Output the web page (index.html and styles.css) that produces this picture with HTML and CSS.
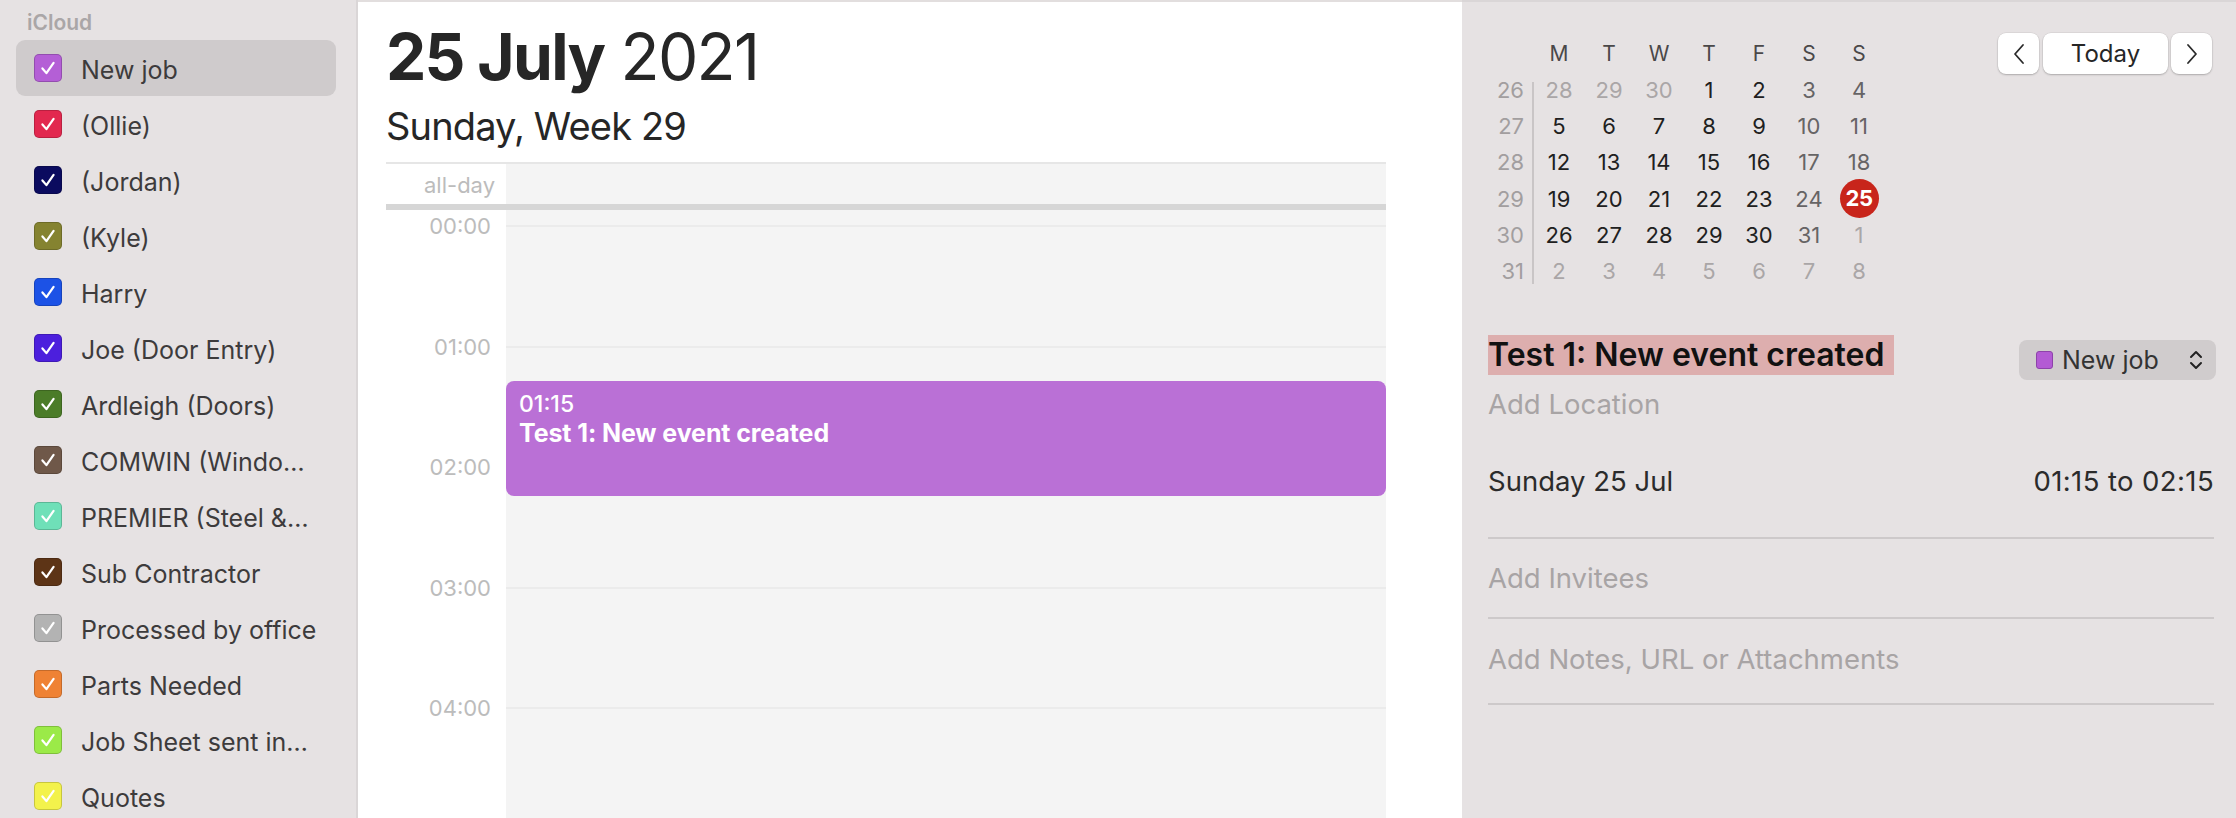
FILE: index.html
```html
<!DOCTYPE html>
<html lang="en">
<head>
<meta charset="utf-8">
<title>Calendar – Day</title>
<link rel="stylesheet" href="styles.css">
</head>
<body>
<div class="app">
  <aside class="sidebar">
    <div class="group-title">iCloud</div>
    <ul class="cal-list">
      <li class="cal-item selected"><span class="check c-newjob"><svg viewBox="0 0 28 28"><path d="M8 14.5 L12.3 19.5 L20 8.5"/></svg></span><span class="cal-name">New job</span></li>
      <li class="cal-item"><span class="check c-ollie"><svg viewBox="0 0 28 28"><path d="M8 14.5 L12.3 19.5 L20 8.5"/></svg></span><span class="cal-name">(Ollie)</span></li>
      <li class="cal-item"><span class="check c-jordan"><svg viewBox="0 0 28 28"><path d="M8 14.5 L12.3 19.5 L20 8.5"/></svg></span><span class="cal-name">(Jordan)</span></li>
      <li class="cal-item"><span class="check c-kyle"><svg viewBox="0 0 28 28"><path d="M8 14.5 L12.3 19.5 L20 8.5"/></svg></span><span class="cal-name">(Kyle)</span></li>
      <li class="cal-item"><span class="check c-harry"><svg viewBox="0 0 28 28"><path d="M8 14.5 L12.3 19.5 L20 8.5"/></svg></span><span class="cal-name">Harry</span></li>
      <li class="cal-item"><span class="check c-joe"><svg viewBox="0 0 28 28"><path d="M8 14.5 L12.3 19.5 L20 8.5"/></svg></span><span class="cal-name">Joe (Door Entry)</span></li>
      <li class="cal-item"><span class="check c-ardleigh"><svg viewBox="0 0 28 28"><path d="M8 14.5 L12.3 19.5 L20 8.5"/></svg></span><span class="cal-name">Ardleigh (Doors)</span></li>
      <li class="cal-item"><span class="check c-comwin"><svg viewBox="0 0 28 28"><path d="M8 14.5 L12.3 19.5 L20 8.5"/></svg></span><span class="cal-name">COMWIN (Windo…</span></li>
      <li class="cal-item"><span class="check c-premier"><svg viewBox="0 0 28 28"><path d="M8 14.5 L12.3 19.5 L20 8.5"/></svg></span><span class="cal-name">PREMIER (Steel &amp;…</span></li>
      <li class="cal-item"><span class="check c-sub"><svg viewBox="0 0 28 28"><path d="M8 14.5 L12.3 19.5 L20 8.5"/></svg></span><span class="cal-name">Sub Contractor</span></li>
      <li class="cal-item"><span class="check c-processed"><svg viewBox="0 0 28 28"><path d="M8 14.5 L12.3 19.5 L20 8.5"/></svg></span><span class="cal-name">Processed by office</span></li>
      <li class="cal-item"><span class="check c-parts"><svg viewBox="0 0 28 28"><path d="M8 14.5 L12.3 19.5 L20 8.5"/></svg></span><span class="cal-name">Parts Needed</span></li>
      <li class="cal-item"><span class="check c-jobsheet"><svg viewBox="0 0 28 28"><path d="M8 14.5 L12.3 19.5 L20 8.5"/></svg></span><span class="cal-name">Job Sheet sent in…</span></li>
      <li class="cal-item"><span class="check c-quotes"><svg viewBox="0 0 28 28"><path d="M8 14.5 L12.3 19.5 L20 8.5"/></svg></span><span class="cal-name">Quotes</span></li>
    </ul>
  </aside>

  <main class="day-view">
    <header class="day-header">
      <h1 class="day-title"><b>25 July</b> 2021</h1>
      <h2 class="day-subtitle">Sunday, Week 29</h2>
    </header>
    <section class="timeline">
      <div class="allday-row">
        <div class="gutter allday-label">all-day</div>
        <div class="allday-cell"></div>
      </div>
      <div class="hours">
        <div class="gutter hour-labels">
          <div class="hour-label">00:00</div>
          <div class="hour-label">01:00</div>
          <div class="hour-label">02:00</div>
          <div class="hour-label">03:00</div>
          <div class="hour-label">04:00</div>
        </div>
        <div class="day-col">
          <div class="slot"></div>
          <div class="slot"></div>
          <div class="slot"></div>
          <div class="slot"></div>
          <div class="slot"></div>
          <div class="slot"></div>
          <div class="event">
            <div class="event-time">01:15</div>
            <div class="event-title">Test 1: New event created</div>
          </div>
        </div>
      </div>
    </section>
  </main>

  <aside class="inspector">
    <div class="inspector-top">
      <div class="mini-cal">
        <div class="weeks">
          <div>26</div><div>27</div><div>28</div><div>29</div><div>30</div><div>31</div>
        </div>
        <div class="days">
          <div class="dow">M</div><div class="dow">T</div><div class="dow">W</div><div class="dow">T</div><div class="dow">F</div><div class="dow">S</div><div class="dow">S</div>
          <div class="d other">28</div><div class="d other">29</div><div class="d other">30</div><div class="d">1</div><div class="d">2</div><div class="d we">3</div><div class="d we">4</div>
          <div class="d">5</div><div class="d">6</div><div class="d">7</div><div class="d">8</div><div class="d">9</div><div class="d we">10</div><div class="d we">11</div>
          <div class="d">12</div><div class="d">13</div><div class="d">14</div><div class="d">15</div><div class="d">16</div><div class="d we">17</div><div class="d we">18</div>
          <div class="d">19</div><div class="d">20</div><div class="d">21</div><div class="d">22</div><div class="d">23</div><div class="d we">24</div><div class="d today"><span>25</span></div>
          <div class="d">26</div><div class="d">27</div><div class="d">28</div><div class="d">29</div><div class="d">30</div><div class="d we">31</div><div class="d other">1</div>
          <div class="d other">2</div><div class="d other">3</div><div class="d other">4</div><div class="d other">5</div><div class="d other">6</div><div class="d other">7</div><div class="d other">8</div>
        </div>
      </div>
      <div class="nav">
        <button class="nav-btn arrow" aria-label="Previous"><svg viewBox="0 0 12 22"><path d="M10 2 L2 11 L10 20"/></svg></button>
        <button class="nav-btn today-btn">Today</button>
        <button class="nav-btn arrow" aria-label="Next"><svg viewBox="0 0 12 22"><path d="M2 2 L10 11 L2 20"/></svg></button>
      </div>
    </div>

    <div class="event-detail">
      <div class="detail-head">
        <span class="detail-title">Test 1: New event created</span>
        <div class="cal-select">
          <span class="swatch"></span>
          <span class="cal-select-name">New job</span>
          <svg class="updown" viewBox="0 0 14 22"><path d="M2 8 L7 3 L12 8"/><path d="M2 14 L7 19 L12 14"/></svg>
        </div>
      </div>
      <div class="placeholder location">Add Location</div>
      <div class="when"><span>Sunday 25 Jul</span><span>01:15 to 02:15</span></div>
      <div class="field placeholder">Add Invitees</div>
      <div class="field placeholder notes">Add Notes, URL or Attachments</div>
    </div>
  </aside>
</div>
</body>
</html>
```

FILE: styles.css
```css
* { box-sizing: border-box; }

html, body {
  margin: 0;
  padding: 0;
  height: 818px;
  overflow: hidden;
}

body {
  font-family: "Inter", "Noto Sans", "Liberation Sans", sans-serif;
  color: #2a2a2a;
  background: #e6e2e3;
}

.app {
  display: flex;
  height: 818px;
  width: 2236px;
}

/* ---------- Sidebar ---------- */
.sidebar {
  width: 358px;
  flex: none;
  background: #e6e2e3;
  border-right: 2px solid #dad6d7;
  padding-top: 6px;
}

.group-title {
  font-size: 21px;
  font-weight: 600;
  color: #aaa6a7;
  padding-left: 27px;
  padding-top: 4px;
  height: 34px;
  line-height: 26px;
}

.cal-list {
  list-style: none;
  margin: 0;
  padding: 0;
}

.cal-item {
  display: flex;
  align-items: center;
  height: 56px;
  margin: 0 20px 0 16px;
  padding-left: 18px;
  border-radius: 9px;
  font-size: 25px;
  color: #3d3b3c;
  white-space: nowrap;
}

.cal-item.selected {
  background: #cfcbcc;
}

.cal-name {
  margin-left: 19px;
  padding-top: 3px;
}

.check {
  width: 28px;
  height: 28px;
  border-radius: 5px;
  flex: none;
  display: flex;
  border: 1px solid rgba(0, 0, 0, 0.18);
}

.check svg {
  width: 26px;
  height: 26px;
  fill: none;
  stroke: #fff;
  stroke-width: 2.4;
  stroke-linecap: round;
  stroke-linejoin: round;
}

.c-newjob    { background: #b45fd6; }
.c-ollie     { background: #e2284f; }
.c-jordan    { background: #0b0b5f; }
.c-kyle      { background: #858330; }
.c-harry     { background: #1c52e6; }
.c-joe       { background: #4c1fdd; }
.c-ardleigh  { background: #4b7c28; }
.c-comwin    { background: #6f5849; }
.c-premier   { background: #6fe0b8; }
.c-sub       { background: #5d3416; }
.c-processed { background: #b3b3b3; }
.c-parts     { background: #ef8234; }
.c-jobsheet  { background: #9bea48; }
.c-quotes    { background: #f3f24c; }

/* ---------- Day view ---------- */
.day-view {
  width: 1104px;
  flex: none;
  background: #fff;
  border-top: 2px solid #e2dede;
  display: flex;
  flex-direction: column;
  padding-left: 28px;
  padding-right: 76px;
}

.day-header {
  padding-top: 23px;
}

.day-title {
  margin: 0;
  font-size: 64px;
  line-height: 64px;
  font-weight: 400;
  letter-spacing: -1.7px;
  color: #262626;
}

.day-title b {
  font-weight: 700;
}

.day-subtitle {
  margin: 14px 0 0;
  font-size: 38px;
  line-height: 46px;
  font-weight: 400;
  letter-spacing: -0.85px;
  color: #262626;
}

.timeline {
  margin-top: 13px;
  flex: 1;
  display: flex;
  flex-direction: column;
  overflow: hidden;
}

.gutter {
  width: 120px;
  flex: none;
  background: #fff;
  text-align: right;
  color: #bcbcbc;
}

.allday-row {
  display: flex;
  height: 48px;
  border-top: 2px solid #e6e6e6;
  border-bottom: 6px solid #d6d6d6;
}

.allday-label {
  font-size: 22px;
  line-height: 42px;
  padding-right: 11px;
}

.allday-cell {
  flex: 1;
  background: #f4f4f4;
}

.hours {
  flex: 1;
  display: flex;
}

.hour-labels {
  padding-top: 4px;
  padding-right: 15px;
}

.hour-label {
  height: 120.5px;
  font-size: 22px;
  line-height: 24px;
}

.day-col {
  flex: 1;
  position: relative;
  background: #f4f4f4;
  padding-top: 15px;
}

.slot {
  height: 120.5px;
  border-top: 2px solid #ebebeb;
}

.event {
  position: absolute;
  top: 171px;
  left: 0;
  right: 0;
  height: 115px;
  background: #ba70d6;
  border-radius: 8px;
  padding: 9px 13px;
  color: #fff;
}

.event-time {
  font-size: 23px;
  line-height: 28px;
  font-weight: 500;
}

.event-title {
  font-size: 25px;
  line-height: 31px;
  font-weight: 700;
  letter-spacing: -0.1px;
}

/* ---------- Inspector ---------- */
.inspector {
  flex: 1;
  background: #e6e2e3;
  border-top: 2px solid #dad6d7;
  padding: 0 20px 0 26px;
}

.inspector-top {
  display: flex;
  justify-content: space-between;
  align-items: flex-start;
}

.mini-cal {
  display: flex;
  margin-top: 33.5px;
  font-size: 22px;
}

.weeks {
  width: 46px;
  margin-top: 36.3px;
  padding-right: 10px;
  text-align: right;
  color: #a29e9f;
  background: linear-gradient(#c9c5c6, #c9c5c6) right 10px / 2px calc(100% - 16px) no-repeat;
}

.weeks div {
  height: 36.3px;
  line-height: 36.3px;
}

.days {
  display: grid;
  grid-template-columns: repeat(7, 50px);
  grid-auto-rows: 36.3px;
  text-align: center;
}

.dow {
  line-height: 36.3px;
  font-size: 21px;
  color: #4a4849;
}

.d {
  line-height: 36.3px;
  color: #202020;
  display: flex;
  align-items: center;
  justify-content: center;
}

.d.we { color: #666465; }
.d.other { color: #aaa6a7; }

.d.today span {
  width: 39px;
  height: 39px;
  border-radius: 50%;
  background: #c8251b;
  color: #fff;
  font-weight: 700;
  line-height: 39px;
  letter-spacing: -0.5px;
}

.nav {
  display: flex;
  margin-top: 31px;
  margin-right: 4px;
  gap: 3px;
}

.nav-btn {
  height: 41px;
  border: none;
  background: #fff;
  border-radius: 8px;
  box-shadow: 0 1px 2px rgba(0, 0, 0, 0.22), 0 0 0 0.5px rgba(0, 0, 0, 0.08);
  font-family: inherit;
  font-size: 24px;
  color: #262626;
  padding: 0;
  display: flex;
  align-items: center;
  justify-content: center;
}

.nav-btn.arrow {
  width: 41px;
}

.nav-btn.arrow svg {
  width: 12px;
  height: 22px;
  fill: none;
  stroke: #2a2a2a;
  stroke-width: 1.8;
  stroke-linecap: round;
  stroke-linejoin: round;
}

.today-btn {
  width: 125px;
  margin-left: 1px;
}

.event-detail {
  margin-top: 45px;
  padding-right: 2px;
}

.detail-head {
  display: flex;
  justify-content: space-between;
  align-items: flex-start;
}

.detail-title {
  font-size: 32px;
  line-height: 40px;
  font-weight: 600;
  color: #111;
  background: #ddaeae;
  padding-right: 10px;
  letter-spacing: 0;
}

.cal-select {
  margin-top: 5px;
  margin-right: -2px;
  width: 197px;
  height: 40px;
  border-radius: 8px;
  background: #d0cccd;
  display: flex;
  align-items: center;
  padding-left: 17px;
  font-size: 25px;
  color: #333;
}

.swatch {
  width: 17px;
  height: 18px;
  border-radius: 3px;
  background: #b35ad4;
  border: 1.5px solid #8d42aa;
  flex: none;
}

.cal-select-name {
  margin-left: 9px;
  flex: 1;
}

.updown {
  width: 14px;
  height: 22px;
  margin-right: 13px;
  fill: none;
  stroke: #222;
  stroke-width: 2;
  stroke-linecap: round;
  stroke-linejoin: round;
}

.placeholder {
  color: #a8a4a5;
}

.location,
.when,
.field {
  font-size: 27.5px;
  line-height: 34px;
}

.location {
  margin-top: 7px;
}

.when {
  margin-top: 43px;
  padding-bottom: 39px;
  display: flex;
  justify-content: space-between;
  color: #2b2b2b;
  border-bottom: 2px solid #cdc9ca;
}

.when span:last-child {
  letter-spacing: 0.4px;
}

.field {
  padding: 22px 0;
  border-bottom: 2px solid #cdc9ca;
}

.field.notes {
  padding: 23px 0 27px;
}
```
